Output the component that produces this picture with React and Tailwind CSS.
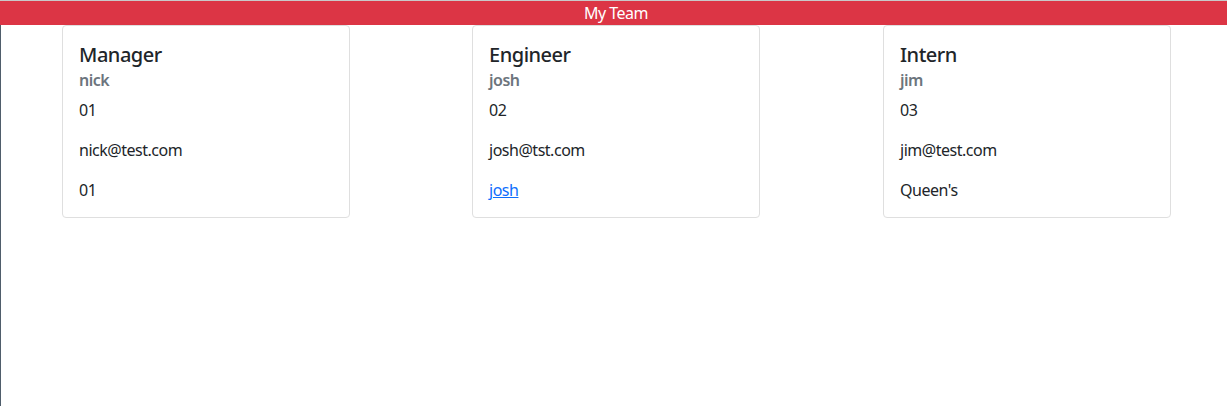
export default function App() {
  const cards = [
    { title: "Manager", name: "nick", id: "01", email: "nick@test.com", extra: "01", link: false, cls: "" },
    { title: "Engineer", name: "josh", id: "02", email: "josh@tst.com", extra: "josh", link: true, cls: "" },
    { title: "Intern", name: "jim", id: "03", email: "jim@test.com", extra: "Queen's", link: false, cls: "ml-px" },
  ];
  return (
    <div
      className="min-h-[406px] bg-white border-t border-t-[#c9c9c9] text-[#212529] tracking-[-0.03em]"
      style={{ fontFamily: '"Noto Sans", "Open Sans", sans-serif' }}
    >
      <div className="h-6 bg-[#dc3545] text-white text-center text-base leading-6 pl-[5px]">My Team</div>
      <div className="min-h-[381px] border-l border-l-[#4f5d6b] flex pl-[61px] gap-[122px]">
        {cards.map((c) => (
          <div
            key={c.title}
            className={`w-[288px] h-[193px] border border-[#dfdfdf] rounded-[4px] px-4 pt-[17px] pb-4 flex flex-col ${c.cls}`}
          >
            <h5 className="text-xl font-medium leading-6 mb-2">{c.title}</h5>
            <h6 className="text-base font-semibold leading-[19px] -mt-1 mb-2 text-[#6c757d]">{c.name}</h6>
            <p className="text-base leading-6 mb-4">{c.id}</p>
            <p className="text-base leading-6 mb-4">{c.email}</p>
            {c.link ? (
              <p className="text-base leading-6">
                <a href="#" className="text-[#0d6efd] underline">{c.extra}</a>
              </p>
            ) : (
              <p className="text-base leading-6">{c.extra}</p>
            )}
          </div>
        ))}
      </div>
    </div>
  );
}
